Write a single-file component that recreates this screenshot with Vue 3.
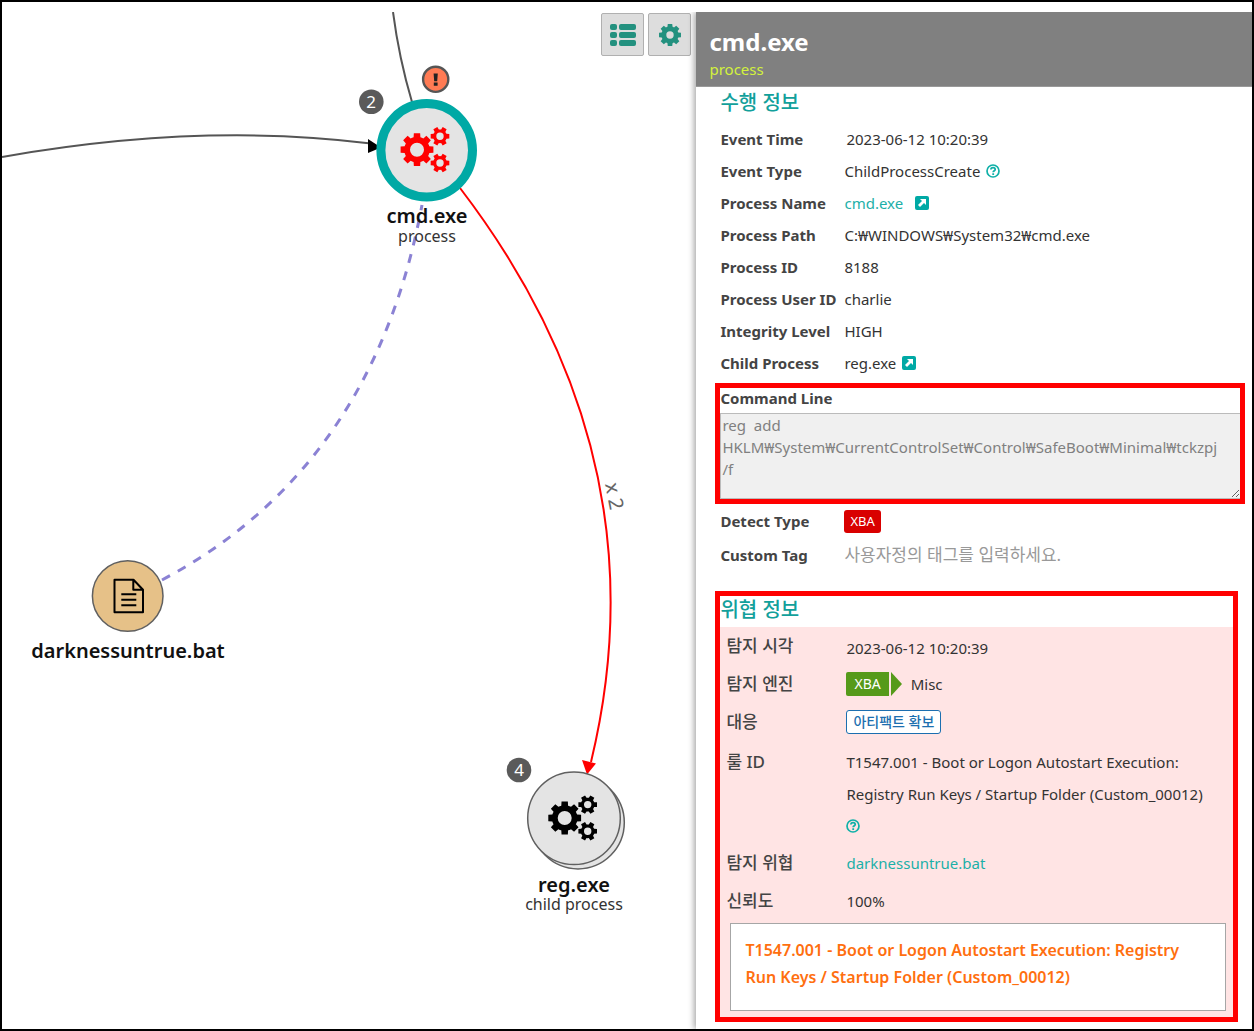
<script setup>
function gearPath(cx, cy, outer, body, teeth, baseHalf, tipHalf) {
  const point = (r, a) => `${(cx + r * Math.cos(a)).toFixed(2)},${(cy + r * Math.sin(a)).toFixed(2)}`
  let d = ''
  for (let i = 0; i < teeth; i++) {
    const a = (i * 2 * Math.PI) / teeth
    d += `${i ? `A${body},${body} 0 0 1 ` : 'M'}${point(body, a - baseHalf)}`
    d += `L${point(outer, a - tipHalf)}L${point(outer, a + tipHalf)}L${point(body, a + baseHalf)}`
  }
  return `${d}A${body},${body} 0 0 1 ${point(body, -baseHalf)}Z`
}
const hole = (cx, cy, r) => `M${cx - r},${cy}a${r},${r} 0 1 0 ${2 * r},0a${r},${r} 0 1 0 ${-2 * r},0Z`

const gearsIcon = [
  gearPath(0, 0, 16.7, 12.8, 8, 0.27, 0.19), hole(0, 0, 7),
  gearPath(23, -13.4, 9.6, 6.9, 6, 0.36, 0.24), hole(23, -13.4, 3.7),
  gearPath(23, 13.3, 9.6, 6.9, 6, 0.36, 0.24), hole(23, 13.3, 3.7),
].join('')
const cogIcon = gearPath(12, 12, 11.2, 8.6, 8, 0.3, 0.2) + hole(12, 12, 3.7)

const processRows = [
  { label: 'Event Time', value: '2023-06-12 10:20:39', stamp: true },
  { label: 'Event Type', value: 'ChildProcessCreate', help: true },
  { label: 'Process Name', value: 'cmd.exe', link: true, open: true },
  { label: 'Process Path', value: 'C:₩WINDOWS₩System32₩cmd.exe' },
  { label: 'Process ID', value: '8188' },
  { label: 'Process User ID', value: 'charlie' },
  { label: 'Integrity Level', value: 'HIGH' },
  { label: 'Child Process', value: 'reg.exe', open: true },
]
const command = 'reg  add HKLM₩System₩CurrentControlSet₩Control₩SafeBoot₩Minimal₩tckzpj /f'
</script>

<template>
  <div class="app">
    <main class="graph">
      <svg class="canvas" role="img" aria-label="Process graph">
        <g transform="translate(-2 -12)">
          <path class="edge" d="M2,157 Q200,122 371,143.5" />
          <path class="edge" d="M393,12 Q399,58 412,102" />
          <path d="M368,139 L381,147.5 L368,153 Z" />
          <path class="edge red" d="M460,188 Q665,456 591,762" />
          <path fill="#f00" d="M582,760 L596,763.5 L587,774.5 Z" />
          <path class="edge dashed" d="M162,580 Q373,468 422,205" />

          <ellipse cx="426.7" cy="150.3" rx="45.8" ry="46.7" fill="#e4e4e4" stroke="#00a9a5" stroke-width="9" />
          <path :d="gearsIcon" fill="#f00" fill-rule="evenodd" transform="translate(417 149.7)" />
          <circle class="count" cx="371.3" cy="101.7" r="12.3" />
          <text class="count-text" x="371" y="108">2</text>
          <circle cx="435.7" cy="79.3" r="12.6" fill="#ff7b54" stroke="#555" stroke-width="2.4" />
          <path d="M433.6,73.4h4.2l-0.6,7.8h-3z M433.8,82.6h3.8v3.2h-3.8z" fill="#222" />
          <text class="name" x="427" y="223">cmd.exe</text>
          <text class="kind" x="427" y="242">process</text>

          <circle class="outline" cx="127.7" cy="596" r="35.3" fill="#e6c188" />
          <g fill="none" stroke="#000" stroke-width="2">
            <path d="M114.5,579.7h19l9.5,10v22.6h-28.5z M133.3,579.7v10h9.2" stroke-linejoin="round" />
            <path d="M121.3,594.3h15 M121.3,599.8h15 M121.3,605.2h15" />
          </g>
          <text class="name" x="128" y="658">darknessuntrue.bat</text>

          <circle class="outline" cx="578" cy="822.6" r="46.3" fill="#e4e4e4" />
          <circle class="outline" cx="574" cy="818.3" r="46.3" fill="#e4e4e4" />
          <path :d="gearsIcon" fill-rule="evenodd" transform="translate(564.7 818)" />
          <circle class="count" cx="519" cy="770" r="12.3" />
          <text class="count-text" x="519" y="776">4</text>
          <text class="name" x="574" y="892">reg.exe</text>
          <text class="kind" x="574" y="910">child process</text>
          <text class="repeat" transform="translate(605 484) rotate(79)">x 2</text>
        </g>
      </svg>
      <div class="toolbar">
        <button type="button" aria-label="List view">
          <svg width="26" height="22" viewBox="0 0 26 22" fill="#23917f">
            <rect x="0" y="0" width="7" height="6" rx="2" /><rect x="9" y="0" width="17" height="6" rx="2" />
            <rect x="0" y="8" width="7" height="6" rx="2" /><rect x="9" y="8" width="17" height="6" rx="2" />
            <rect x="0" y="16" width="7" height="6" rx="2" /><rect x="9" y="16" width="17" height="6" rx="2" />
          </svg>
        </button>
        <button type="button" aria-label="Settings">
          <svg width="24" height="24" viewBox="0 0 24 24"><path :d="cogIcon" fill="#23917f" fill-rule="evenodd" /></svg>
        </button>
      </div>
    </main>

    <aside class="panel">
      <header class="head">
        <h1>cmd.exe</h1>
        <p>process</p>
      </header>

      <section class="info">
        <h2>수행 정보</h2>
        <dl>
          <div v-for="row in processRows" :key="row.label" class="row">
            <dt>{{ row.label }}</dt>
            <dd :class="{ stamp: row.stamp }">
              <a v-if="row.link" href="#" class="wide">{{ row.value }}</a>
              <span v-else>{{ row.value }}</span>
              <svg v-if="row.help" class="icon" viewBox="0 0 14 14">
                <circle cx="7" cy="7" r="6" fill="none" stroke="#10b0a8" stroke-width="1.7" />
                <path d="M4.9,5.6c0-2.6 4.3-2.6 4.3-.2c0,1.3-2,1.4-2,2.9M7.2,9.3v1.6" fill="none" stroke="#10b0a8" stroke-width="1.8" />
              </svg>
              <svg v-if="row.open" class="icon" viewBox="0 0 14 14">
                <rect width="14" height="14" rx="2" fill="#00a9a5" />
                <path d="M5,3h6v6l-2-2l-4,4l-2-2l4-4z" fill="#fff" />
              </svg>
            </dd>
          </div>
        </dl>
      </section>

      <section class="marked command">
        <label for="command">Command Line</label>
        <textarea id="command" readonly :value="command"></textarea>
      </section>

      <section class="info extra">
        <div class="row">
          <span class="label">Detect Type</span>
          <span class="tag">XBA</span>
        </div>
        <div class="row">
          <label class="label" for="tag">Custom Tag</label>
          <input id="tag" type="text" placeholder="사용자정의 태그를 입력하세요.">
        </div>
      </section>

      <section class="marked threat">
        <h2>위협 정보</h2>
        <div class="threat-body">
          <dl>
            <div class="item"><dt>탐지 시각</dt><dd class="late">2023-06-12 10:20:39</dd></div>
            <div class="item"><dt>탐지 엔진</dt><dd class="engine"><span class="engine-tag">XBA</span><i class="arrow"></i>Misc</dd></div>
            <div class="item"><dt>대응</dt><dd><button type="button" class="artifact">아티팩트 확보</button></dd></div>
            <div class="item rule">
              <dt>룰 ID</dt>
              <dd>
                T1547.001 - Boot or Logon Autostart Execution: Registry Run Keys / Startup Folder (Custom_00012)
                <svg class="icon block" viewBox="0 0 14 14">
                  <circle cx="7" cy="7" r="6" fill="none" stroke="#10b0a8" stroke-width="1.7" />
                  <path d="M4.9,5.6c0-2.6 4.3-2.6 4.3-.2c0,1.3-2,1.4-2,2.9M7.2,9.3v1.6" fill="none" stroke="#10b0a8" stroke-width="1.8" />
                </svg>
              </dd>
            </div>
            <div class="item"><dt>탐지 위협</dt><dd><a href="#">darknessuntrue.bat</a></dd></div>
            <div class="item"><dt>신뢰도</dt><dd>100%</dd></div>
          </dl>
          <p class="note">T1547.001 - Boot or Logon Autostart Execution: Registry Run Keys / Startup Folder (Custom_00012)</p>
        </div>
      </section>
    </aside>
  </div>
</template>

<style>
body { margin: 0; background: #fff; }
</style>

<style scoped>
* { box-sizing: border-box; }
.app {
  display: grid;
  grid-template-columns: minmax(0, 5fr) minmax(0, 4fr);
  min-height: 100vh;
  padding-top: 10px;
  border: 2px solid #000;
  background: #fff;
  color: #333;
  font: 15px/22px "Noto Sans", "Noto Sans CJK KR", sans-serif;
}
h1, h2, p, dl, dd { margin: 0; }
a { color: #1cb0a8; text-decoration: none; }

.graph { position: relative; overflow: hidden; }
.canvas { position: absolute; inset: 0; width: 100%; height: 100%; }
.edge { fill: none; stroke: #555; stroke-width: 2; }
.edge.red { stroke: #f00; }
.edge.dashed { stroke: #8b82d4; stroke-width: 3; stroke-dasharray: 9 9; }
.outline { stroke: #606060; stroke-width: 1.5; }
.count { fill: #5a5a5a; }
.count-text { fill: #fff; font-size: 17px; text-anchor: middle; }
.name { fill: #111; font-size: 20px; font-weight: 600; text-anchor: middle; }
.kind { fill: #333; font-size: 16px; text-anchor: middle; }
.repeat { fill: #666; font-size: 20px; }

.toolbar { position: absolute; top: 1px; right: 5px; display: flex; gap: 4px; }
.toolbar button {
  display: grid;
  place-items: center;
  width: 43px;
  height: 43px;
  padding: 0;
  border: 1px solid #b0b0b0;
  border-radius: 2px;
  background: #ddd;
}

.panel { position: relative; background: #fff; box-shadow: -2px 0 6px rgba(0, 0, 0, 0.35); clip-path: inset(0 0 0 -10px); }
.head { height: 75px; padding: 14px 13px 0; background: #808080; color: #fff; border-bottom: 1px solid #999; }
.head h1 { font-size: 24px; line-height: 32px; font-weight: 700; }
.head p { color: #d3f23c; line-height: 22px; }
h2 { color: #12a09b; font-size: 20px; line-height: 32px; font-weight: 500; }
.info { padding-left: 24px; }
.info dl { padding-top: 4px; }
.row { display: grid; grid-template-columns: 124px 1fr; align-items: center; min-height: 32px; }
dt, .label, .command label { font-weight: 700; color: #444; white-space: nowrap; }
dd { display: flex; align-items: center; gap: 6px; }
.stamp { padding-left: 2px; }
.wide { margin-right: 6px; }
.icon { width: 14px; height: 14px; flex: none; }
.block { display: block; margin: 9px 0; }

.marked { border: 5px solid #f00; }
.command { margin: 4px 7px 0 19px; height: 121px; }
.command label { display: block; margin-bottom: 5px; line-height: 20px; }
.command textarea {
  display: block;
  width: 100%;
  height: 86px;
  padding: 0 20px 0 1px;
  border: 1px solid #bbb;
  border-right: 0;
  background: #f0f0f0;
  color: #808080;
  font: inherit;
  outline: 0;
}
.extra .row { height: 34px; }
.tag {
  justify-self: start;
  padding: 0 6px;
  border-radius: 3px;
  background: #d90000;
  color: #fff;
  font-size: 13px;
  line-height: 23px;
}
.extra input { padding: 0; border: 0; outline: 0; background: none; font: inherit; font-size: 17px; }
.extra input::placeholder { color: #999; }

.threat { margin: 19px 14px 6px 19px; }
.threat h2 { padding-bottom: 4px; line-height: 27px; }
.threat-body { padding: 0 7px 6px; background: #ffe4e4; }
.item { display: grid; grid-template-columns: 119px 1fr; min-height: 38px; line-height: 38px; }
.item dt { margin-left: -1px; font-size: 17px; font-weight: 500; }
.item dd { min-width: 0; }
.item .late { padding-top: 4px; line-height: 34px; }
.engine-tag { padding: 0 8px; border-radius: 2px 0 0 2px; background: #569a1a; color: #fff; font-size: 14px; line-height: 24px; }
.arrow { margin: 0 3px 0 -4px; border: 12px solid transparent; border-left: 11px solid #569a1a; border-right: 0; }
.artifact {
  height: 24px;
  padding: 0 6px;
  border: 1px solid #1c6fb0;
  border-radius: 3px;
  background: #fff;
  color: #1c6fb0;
  font: 500 14px/20px "Noto Sans", "Noto Sans CJK KR", sans-serif;
}
.rule { padding: 2px 0; }
.rule dd { display: block; line-height: 32px; padding-top: 3px; }
.note {
  margin: 3px 0 0 3px;
  min-height: 88px;
  padding: 13px 36px 13px 14px;
  border: 1px solid #a6a6a6;
  background: #fff;
  color: #ff6f0f;
  font-size: 16px;
  font-weight: 600;
  line-height: 27px;
}
</style>
